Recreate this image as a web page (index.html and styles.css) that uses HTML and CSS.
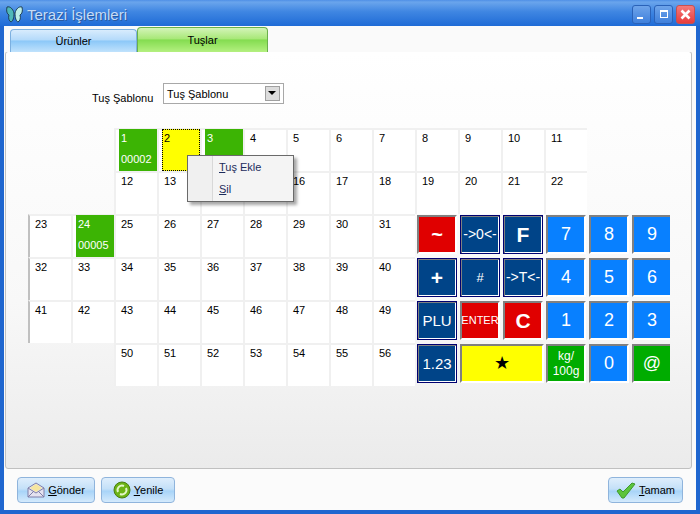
FILE: index.html
```html
<!DOCTYPE html>
<html lang="tr">
<head>
<meta charset="utf-8">
<title>Terazi İşlemleri</title>
<link rel="stylesheet" href="styles.css">
</head>
<body>
<div class="window">
	<div class="titlebar">
		<svg class="appicon" width="17" height="17" viewBox="0 0 17 17">
			<path d="M8 7C7 3 4 0 1 1c-1 4 0 7 2 8-1 3 0 6 2 7 2-1 3-4 3-9z" fill="#4fb8b8" stroke="#1d3f58"/>
			<path d="M9 7c1-4 4-7 7-6 1 4 0 7-2 8 1 3 0 6-2 7-2-1-3-4-3-9z" fill="#bdeee6" stroke="#1d3f58"/>
		</svg>
		<span class="title">Terazi İşlemleri</span>
		<div class="winbtns">
			<div class="winbtn"><span class="min"></span></div>
			<div class="winbtn"><span class="max"></span></div>
			<div class="winbtn close">
				<svg width="11" height="11" viewBox="0 0 11 11"><path d="M1.5 1.5l8 8M9.5 1.5l-8 8" stroke="#fff" stroke-width="2.6"/></svg>
			</div>
		</div>
	</div>
	<div class="client">
		<div class="tabs">
			<div class="tab tab-blue">Ürünler</div>
			<div class="tab tab-green">Tuşlar</div>
		</div>
		<div class="panel">
			<div class="template-row">
				<span class="template-label">Tuş Şablonu</span>
				<div class="combo">
					<span>Tuş Şablonu</span>
					<div class="combo-btn"></div>
				</div>
			</div>
			<div class="keyboard">
				<div class="cell c2"><span class="paint green">1<br><span class="code">00002</span></span></div>
				<div class="cell"><span class="paint yellow">2</span></div>
				<div class="cell"><span class="paint green">3</span></div>
				<div class="cell">4</div><div class="cell">5</div><div class="cell">6</div><div class="cell">7</div><div class="cell">8</div><div class="cell">9</div><div class="cell">10</div><div class="cell">11</div>

				<div class="cell c2">12</div><div class="cell">13</div><div class="cell">14</div><div class="cell">15</div><div class="cell">16</div><div class="cell">17</div><div class="cell">18</div><div class="cell">19</div><div class="cell">20</div><div class="cell">21</div><div class="cell">22</div>

				<div class="cell edge">23</div>
				<div class="cell"><span class="paint green">24<br><span class="code">00005</span></span></div>
				<div class="cell">25</div><div class="cell">26</div><div class="cell">27</div><div class="cell">28</div><div class="cell">29</div><div class="cell">30</div><div class="cell">31</div>
				<div class="key red big tilde">~</div><div class="key navy arrow">-&gt;0&lt;-</div><div class="key navy big">F</div><div class="key blue">7</div><div class="key blue">8</div><div class="key blue">9</div>

				<div class="cell edge">32</div><div class="cell">33</div><div class="cell">34</div><div class="cell">35</div><div class="cell">36</div><div class="cell">37</div><div class="cell">38</div><div class="cell">39</div><div class="cell">40</div>
				<div class="key navy big">+</div><div class="key navy small">#</div><div class="key navy arrow">-&gt;T&lt;-</div><div class="key blue">4</div><div class="key blue">5</div><div class="key blue">6</div>

				<div class="cell edge">41</div><div class="cell">42</div><div class="cell">43</div><div class="cell">44</div><div class="cell">45</div><div class="cell">46</div><div class="cell">47</div><div class="cell">48</div><div class="cell">49</div>
				<div class="key navy mid">PLU</div><div class="key red tiny">ENTER</div><div class="key red big">C</div><div class="key blue">1</div><div class="key blue">2</div><div class="key blue">3</div>

				<div class="cell c2">50</div><div class="cell">51</div><div class="cell">52</div><div class="cell">53</div><div class="cell">54</div><div class="cell">55</div><div class="cell">56</div>
				<div class="key navy mid">1.23</div><div class="key yellowkey wide">★</div><div class="key greenkey kg">kg/<br>100g</div><div class="key blue">0</div><div class="key greenkey">@</div>
			</div>
			<div class="menu">
				<div class="menu-item"><u>T</u>uş Ekle</div>
				<div class="menu-item"><u>S</u>il</div>
			</div>
		</div>
		<div class="footer">
			<div class="btn btn-send">
				<svg width="18" height="16" viewBox="0 0 18 16"><path d="M1 6l8-5 8 5v9H1z" fill="#e4e2f0" stroke="#7f7fa8"/><path d="M3 6l6-4 6 4-6 4z" fill="#f6e6a0"/><path d="M1 15l6-6M17 15l-6-6M1 6l8 5 8-5" fill="none" stroke="#7f7fa8"/></svg>
				<span><u>G</u>önder</span>
			</div>
			<div class="btn btn-reload">
				<svg width="18" height="18" viewBox="0 0 18 18"><circle cx="9" cy="9" r="8" fill="#6cb416" stroke="#4a7c12"/><path d="M5 11a4.5 4.5 0 0 1 6-6M13 7a4.5 4.5 0 0 1-6 6" fill="none" stroke="#e4f6c8" stroke-width="2"/></svg>
				<span><u>Y</u>enile</span>
			</div>
			<div class="btn btn-ok">
				<svg width="20" height="17" viewBox="0 0 20 17"><path d="M1 9l3-2 3 3 9-9 3 1-11 14h-2z" fill="#5cc43c" stroke="#3f9a2a"/></svg>
				<span><u>T</u>amam</span>
			</div>
		</div>
	</div>
</div>
</body>
</html>
```
FILE: styles.css
```css
* {
	box-sizing: border-box;
	margin: 0;
	padding: 0;
}
body {
	font-family: "Liberation Sans", "DejaVu Sans", sans-serif;
	font-size: 11px;
	color: #000;
	overflow: hidden;
	background: #1c5fc8;
}
.window {
	width: 700px;
	height: 514px;
	display: flex;
	flex-direction: column;
	background: #1f66cf;
}
.titlebar {
	height: 26px;
	flex: none;
	display: flex;
	align-items: center;
	padding: 2px 4px 0 6px;
	background: linear-gradient(#4f8fe6 0, #6aa5ec 8%, #3f86e2 45%, #1f6bd6 100%);
}
.appicon {
	margin-right: 4px;
}
.title {
	font-size: 15px;
	color: #c6dcf6;
	text-shadow: 1px 1px 0 #2a5aa0;
}
.winbtns {
	margin-left: auto;
	display: flex;
	gap: 3px;
	padding-right: 1px;
}
.winbtn {
	width: 19px;
	height: 19px;
	border: 1px solid #2a62b8;
	border-radius: 3px;
	background: linear-gradient(#6ea4ea, #3f80dc);
	display: flex;
	align-items: center;
	justify-content: center;
}
.winbtn.close {
	background: linear-gradient(#f47a7a, #e83c3c);
	border-color: #c85050;
}
.min {
	width: 6px;
	height: 2px;
	background: #fff;
	margin-top: 8px;
	margin-right: 4px;
}
.max {
	width: 8px;
	height: 8px;
	border: 1px solid #fff;
	border-top-width: 2px;
}
.client {
	flex: 1;
	margin: 0 4px 4px;
	background: #fafafa;
	display: flex;
	flex-direction: column;
	min-height: 0;
}
.tabs {
	height: 26px;
	flex: none;
	display: flex;
	align-items: flex-end;
	padding-left: 6px;
	position: relative;
	z-index: 1;
	margin-bottom: -1px;
	background: #fafafa;
}
.tab {
	display: flex;
	align-items: center;
	justify-content: center;
	border: 1px solid;
	border-bottom: 0;
	border-radius: 4px 4px 0 0;
}
.tab-blue {
	width: 127px;
	height: 23px;
	border-color: #7cb0e0;
	background: linear-gradient(#d8ecfd, #b4dafa 45%, #8cc8f8 50%, #c0e2fc);
}
.tab-green {
	width: 131px;
	height: 25px;
	border-color: #6ab04c;
	background: linear-gradient(#d4f4b8, #a8e878 45%, #84dc50 50%, #b4f080);
}
.panel {
	flex: 1;
	margin: 0 4px 0 1px;
	border: 1px solid #c0c0c0;
	border-radius: 3px;
	background: linear-gradient(#fff 0, #f8f8f8 60%, #ebebeb 100%);
	position: relative;
	min-height: 0;
}
.template-row {
	display: flex;
	align-items: center;
	padding: 31px 0 0 86px;
}
.template-label {
	width: 71px;
	padding-top: 9px;
}
.combo {
	width: 121px;
	height: 21px;
	border: 1px solid #a8a8a8;
	background: #fff;
	display: flex;
	align-items: center;
	justify-content: space-between;
	padding: 0 3px;
}
.combo-btn {
	width: 15px;
	height: 15px;
	background: #dcdcdc;
	border: 1px solid #a0a0a0;
	position: relative;
}
.combo-btn::after {
	content: "";
	position: absolute;
	left: 2px;
	top: 4px;
	border: 4px solid transparent;
	border-top: 4px solid #000;
	border-bottom: 0;
}
.keyboard {
	display: grid;
	grid-template-columns: repeat(14, 43px) 40px;
	grid-auto-rows: 43px;
	width: 642px;
	margin: 24px 0 0 22px;
	overflow: hidden;
}
.cell {
	background: #fff;
	border-left: 2px solid #f0f0f0;
	border-top: 2px solid #f0f0f0;
	padding: 1px 0 0 5px;
	line-height: 14px;
}
.c2 {
	grid-column-start: 3;
}
.edge {
	grid-column-start: 1;
	border-left-color: #c0c0c0;
}
.paint {
	display: block;
	height: calc(100% + 2px);
	margin: -2px 0 0 -2px;
	padding: 2px 0 0 2px;
}
.green {
	background: #3cb404;
	color: #fff;
}
.yellow {
	background: #ffff00;
	outline: 1px dotted #000;
	outline-offset: -1px;
}
.code {
	display: block;
	margin-top: 7px;
}
.key {
	margin: 1px 0 3px 2px;
	width: 40px;
	border: 2px solid;
	border-color: #808080 #fff #fff #808080;
	color: #fff;
	display: flex;
	align-items: center;
	justify-content: center;
	text-align: center;
	font-size: 18px;
	line-height: 15px;
}
.red {
	background: #e00000;
}
.navy {
	background: #004488;
	border: 1px solid #000070;
	box-shadow: inset 1px 1px 0 #808080, inset -1px -1px 0 #fff;
}
.blue {
	background: #0880ff;
}
.greenkey {
	background: #00ac00;
}
.yellowkey {
	background: #ffff00;
	color: #000;
	font-size: 18px;
}
.wide {
	grid-column: span 2;
	width: 84px;
}
.big {
	font-weight: bold;
	font-size: 21px;
}
.tilde {
	font-size: 20px;
}
.mid {
	font-size: 15px;
}
.arrow {
	font-size: 14px;
	white-space: nowrap;
}
.small {
	font-size: 13px;
}
.tiny {
	font-size: 11px;
}
.kg {
	font-size: 12px;
}
.menu {
	position: absolute;
	left: 181px;
	top: 103px;
	width: 107px;
	height: 47px;
	border: 1px solid #6a6a6a;
	background: linear-gradient(to right, #f0f0f0 24px, #d8d8d8 24px, #d8d8d8 25px, #f4f4f4 25px);
	box-shadow: 3px 3px 3px rgba(0, 0, 0, 0.35);
	padding-top: 1px;
}
.menu-item {
	height: 22px;
	line-height: 21px;
	padding-left: 31px;
	color: #1c2c5c;
}
.footer {
	height: 41px;
	flex: none;
	display: flex;
	align-items: center;
	gap: 6px;
	padding: 1px 13px 0 13px;
	background: #fbfbfb;
}
.btn {
	height: 26px;
	border: 1px solid #8fb4dc;
	border-radius: 4px;
	background: linear-gradient(#dfeefc, #c4e0f8 45%, #a8d4f8 55%, #d4eafc);
	display: flex;
	align-items: center;
	justify-content: center;
	gap: 3px;
}
.btn-send {
	width: 78px;
}
.btn-reload {
	width: 74px;
}
.btn-ok {
	width: 75px;
	margin-left: auto;
}
```
